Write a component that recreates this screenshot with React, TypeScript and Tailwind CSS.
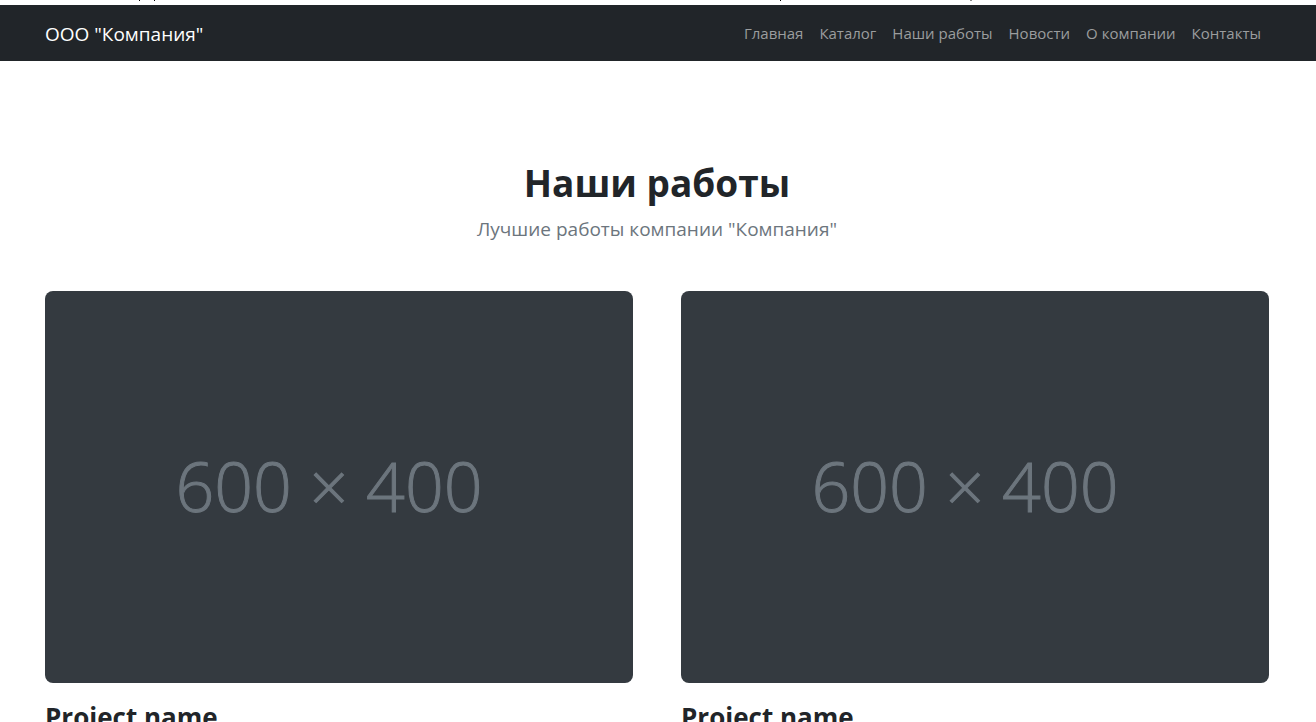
const links = ["Главная", "Каталог", "Наши работы", "Новости", "О компании", "Контакты"];

const projects = [
  { id: 1, name: "Project name" },
  { id: 2, name: "Project name" },
];

function TopEdge() {
  return (
    <svg aria-hidden="true" className="block h-[5px] w-[1316px] max-w-full" viewBox="0 0 1316 5" preserveAspectRatio="xMinYMin slice">
      <path d="M139 0h1v1h-1zM154 0h1v1h-1zM780 0h1v1h-1z" fill="#000000" />
      <path d="M970 0h2v1h-2z" fill="#8c8c8c" />
    </svg>
  );
}

function Navbar() {
  return (
    <nav className="bg-[#212529]">
      <div className="flex h-14 items-center justify-between pr-[47px] pl-[45px]">
        <a href="#" className="pt-px text-[19px] leading-[30px] text-white">
          ООО "Компания"
        </a>
        <ul className="flex">
          {links.map((label) => (
            <li key={label}>
              <a href="#" className="block px-2 py-2 text-[15px] leading-6 text-[#9b9d9e]">
                {label}
              </a>
            </li>
          ))}
        </ul>
      </div>
    </nav>
  );
}

function Placeholder() {
  return (
    <div className="flex aspect-[3/2] items-center justify-center rounded-lg bg-[#343a40] pr-5 pb-[2px]">
      <span className="font-['Open_Sans'] text-[68px] leading-none font-light text-[#6c757d] [-webkit-text-stroke:1px_#6c757d]">
        600 × 400
      </span>
    </div>
  );
}

export default function App() {
  return (
    <div className="h-screen overflow-hidden bg-white font-['Open_Sans','Noto_Sans',sans-serif] text-[#212529]">
      <TopEdge />
      <Navbar />
      <main className="pt-[98px] pr-[47px] pl-[45px]">
        <header className="mb-[47px] text-center">
          <h1 className="mb-[7px] text-[37px] leading-[48px] font-bold">Наши работы</h1>
          <p className="text-[19px] leading-[30px] text-[#6c757d]">Лучшие работы компании "Компания"</p>
        </header>
        <section className="grid grid-cols-2 gap-12">
          {projects.map((project) => (
            <article key={project.id}>
              <Placeholder />
              <h2 className="mt-[17px] text-[26px] leading-[34px] font-bold">{project.name}</h2>
            </article>
          ))}
        </section>
      </main>
    </div>
  );
}
